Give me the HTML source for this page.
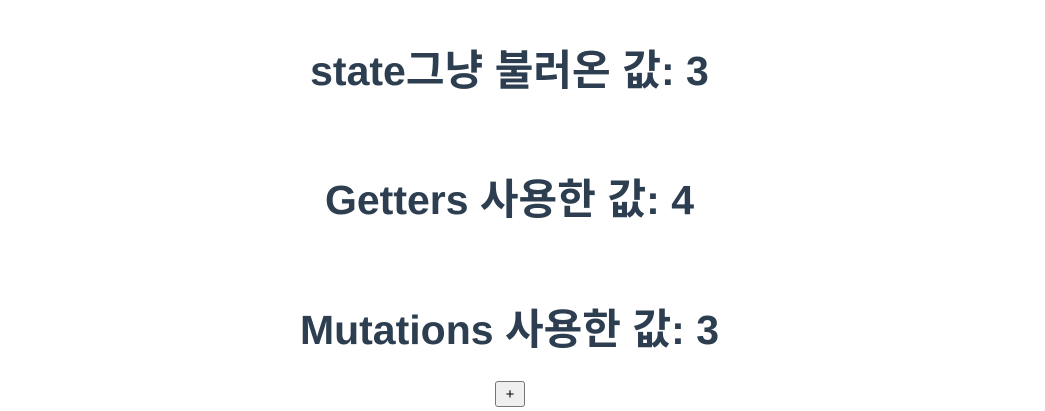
<!DOCTYPE html>
<html><head><meta charset="utf-8"><style>
body{margin:0;width:1045px;height:411px;overflow:hidden;background:#fff;font-family:"Liberation Sans","Noto Sans CJK KR",sans-serif;color:#2c3e50}
h1{position:absolute;left:0;width:1019px;margin:0;text-align:center;font-size:41px;line-height:37px;font-weight:bold}
h1 span{font-size:42px}
button{position:absolute;left:495px;top:381px;width:30px;height:26px;padding:0;font:15px "Liberation Sans",sans-serif;color:#000;background:#efefef;border:1px solid #767676;border-radius:3px}
</style></head><body>
<h1 style="top:52px">state<span>그냥 불러온 값</span>: 3</h1>
<h1 style="top:181px">Getters <span>사용한 값</span>: 4</h1>
<h1 style="top:311px">Mutations <span>사용한 값</span>: 3</h1>
<button>+</button>
</body></html>
